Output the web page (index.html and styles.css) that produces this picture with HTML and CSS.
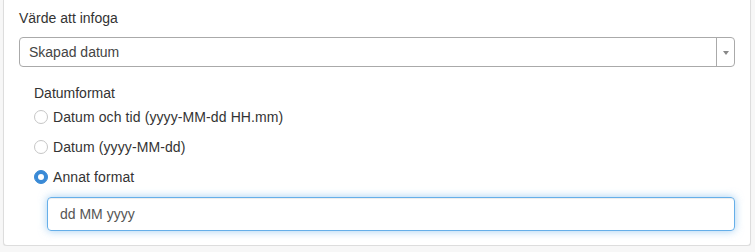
FILE: index.html
```html
<!DOCTYPE html>
<html lang="sv">
<head>
<meta charset="utf-8">
<link rel="stylesheet" href="styles.css">
</head>
<body>
<div class="panel">
  <div class="field-label">Värde att infoga</div>
  <div class="select">
    <span class="select-text">Skapad datum</span>
    <span class="select-arrow"><span class="tri"></span></span>
  </div>
  <div class="format">
    <div class="format-label">Datumformat</div>
    <label class="radio"><span class="circle"></span>Datum och tid (yyyy-MM-dd HH.mm)</label>
    <label class="radio"><span class="circle"></span>Datum (yyyy-MM-dd)</label>
    <label class="radio"><span class="circle checked"></span>Annat format</label>
    <div class="input">dd MM yyyy</div>
  </div>
</div>
</body>
</html>
```
FILE: styles.css
```css
html, body {
  margin: 0;
  padding: 0;
}
body {
  background: #f7f7f7;
  font-family: "Liberation Sans", Arial, sans-serif;
  font-size: 14px;
  line-height: 20px;
  color: #333;
}
.panel {
  box-sizing: border-box;
  margin-left: 3px;
  width: 748px;
  height: 246px;
  background: #fff;
  border: 1px solid #ddd;
  border-top: none;
  border-radius: 0 0 4px 4px;
  box-shadow: 0 1px 1px rgba(0,0,0,0.05);
  padding: 8px 15px 0 15px;
}
.field-label {
  margin-bottom: 9px;
}
.select {
  box-sizing: border-box;
  height: 30px;
  border: 1px solid #aaa;
  border-radius: 4px;
  display: flex;
  align-items: center;
  color: #444;
}
.select-text {
  flex: 1;
  padding-left: 9px;
}
.select-arrow {
  width: 17px;
  height: 28px;
  border-left: 1px solid #aaa;
  display: flex;
  align-items: center;
  justify-content: center;
}
.tri {
  width: 0;
  height: 0;
  border-left: 3px solid transparent;
  border-right: 3px solid transparent;
  border-top: 4px solid #888;
  margin-top: 1px;
}
.format {
  padding-left: 15px;
  padding-top: 16px;
}
.format-label {
  height: 20px;
  margin-bottom: 4px;
}
.radio {
  display: flex;
  align-items: center;
  height: 20px;
  margin-bottom: 10px;
  letter-spacing: 0.1px;
}
.circle {
  box-sizing: border-box;
  width: 14px;
  height: 14px;
  border: 1px solid #c6c6c6;
  border-radius: 50%;
  background: #fff;
  margin-right: 5px;
  position: relative;
}
.circle.checked {
  background: #3a8ad6;
  border-color: #3a8ad6;
}
.circle.checked::after {
  content: "";
  position: absolute;
  left: 3px;
  top: 3px;
  width: 6px;
  height: 6px;
  border-radius: 50%;
  background: #fff;
}
.input {
  box-sizing: border-box;
  margin-left: 13px;
  height: 34px;
  border: 1px solid #66afe9;
  border-radius: 4px;
  box-shadow: inset 0 1px 1px rgba(0,0,0,0.075), 0 0 8px rgba(102,175,233,0.6);
  padding: 6px 12px;
  color: #555;
}
```
